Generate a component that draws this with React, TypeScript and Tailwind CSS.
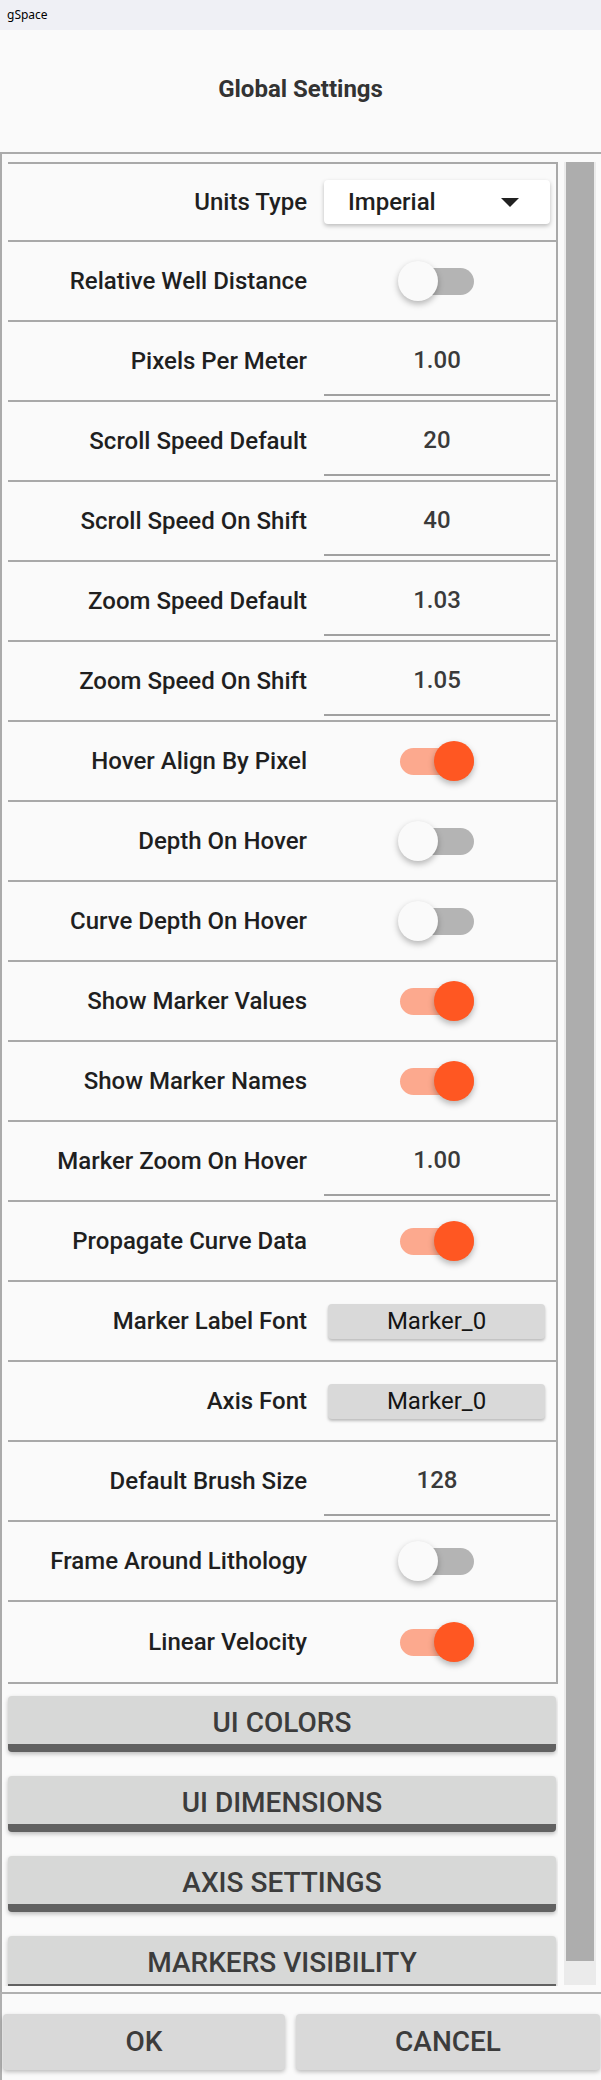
type Row =
  | { label: string; kind: 'select'; value: string }
  | { label: string; kind: 'toggle'; on: boolean }
  | { label: string; kind: 'input'; value: string }
  | { label: string; kind: 'font'; value: string };

const rows: Row[] = [
  { label: 'Units Type', kind: 'select', value: 'Imperial' },
  { label: 'Relative Well Distance', kind: 'toggle', on: false },
  { label: 'Pixels Per Meter', kind: 'input', value: '1.00' },
  { label: 'Scroll Speed Default', kind: 'input', value: '20' },
  { label: 'Scroll Speed On Shift', kind: 'input', value: '40' },
  { label: 'Zoom Speed Default', kind: 'input', value: '1.03' },
  { label: 'Zoom Speed On Shift', kind: 'input', value: '1.05' },
  { label: 'Hover Align By Pixel', kind: 'toggle', on: true },
  { label: 'Depth On Hover', kind: 'toggle', on: false },
  { label: 'Curve Depth On Hover', kind: 'toggle', on: false },
  { label: 'Show Marker Values', kind: 'toggle', on: true },
  { label: 'Show Marker Names', kind: 'toggle', on: true },
  { label: 'Marker Zoom On Hover', kind: 'input', value: '1.00' },
  { label: 'Propagate Curve Data', kind: 'toggle', on: true },
  { label: 'Marker Label Font', kind: 'font', value: 'Marker_0' },
  { label: 'Axis Font', kind: 'font', value: 'Marker_0' },
  { label: 'Default Brush Size', kind: 'input', value: '128' },
  { label: 'Frame Around Lithology', kind: 'toggle', on: false },
  { label: 'Linear Velocity', kind: 'toggle', on: true },
];

const sections = ['UI Colors', 'UI Dimensions', 'Axis Settings', 'Markers Visibility'];

function Toggle({ on }: { on: boolean }) {
  return (
    <div className="relative ml-[74px] h-[40px] w-[76px]">
      <div
        className={`absolute left-[2px] top-[7px] h-[27px] w-[74px] rounded-full ${on ? 'bg-[#fca98e]' : 'bg-[#b4b4b4]'}`}
      />
      <div
        className={`absolute top-0 h-[40px] w-[40px] rounded-full shadow-[0_3px_6px_rgba(0,0,0,0.28)] ${
          on ? 'left-[36px] bg-[#ff5722]' : 'left-0 bg-[#fafafa]'
        }`}
      />
    </div>
  );
}

function Control({ row }: { row: Row }) {
  if (row.kind === 'select') {
    return (
      <div className="flex h-[44px] w-[226px] items-center justify-between rounded-[4px] bg-white pl-[24px] pr-[31px] shadow-[0_2px_4px_rgba(0,0,0,0.25)]">
        <span className="font-medium text-[#1f1f1f]">{row.value}</span>
        <svg width="18" height="9" viewBox="0 0 18 9">
          <polygon points="0,0 18,0 9,9" fill="#212121" />
        </svg>
      </div>
    );
  }
  if (row.kind === 'toggle') {
    return (
      <div className="w-[226px]">
        <Toggle on={row.on} />
      </div>
    );
  }
  if (row.kind === 'font') {
    return (
      <div className="w-[226px]">
        <div className="ml-[4px] flex h-[35px] w-[217px] items-center justify-center rounded-[4px] bg-[#d9d9d9] text-[#141414] shadow-[0_2px_3px_rgba(0,0,0,0.25)]">
          {row.value}
        </div>
      </div>
    );
  }
  return (
    <div className="mb-[4px] flex h-[70px] w-[226px] items-center justify-center self-end border-b-2 border-[#a0a0a0] font-medium text-[#3a3a3a]">
      {row.value}
    </div>
  );
}

export default function App() {
  return (
    <div className="flex h-[2080px] w-[601px] flex-col overflow-hidden bg-[#fafafa] font-[Roboto,sans-serif] text-[24px]">
      <div className="flex h-[30px] shrink-0 items-center bg-[#eff0f5] px-[7px] font-['Noto_Sans',sans-serif] text-[12px] text-black">
        gSpace
      </div>

      <div className="flex h-[122px] shrink-0 items-center justify-center pb-[4px] font-bold text-[#333333]">
        Global Settings
      </div>

      <div className="flex h-[1840px] shrink-0 border-l-2 border-t-2 border-[#ababab]">
        <div className="h-[1832px] w-[556px] overflow-hidden pl-[6px] pt-[8px]">
          <div className="w-[550px] divide-y-2 divide-[#a9a9a9] border-y-2 border-r-2 border-[#a9a9a9]">
            {rows.map((row) => (
              <div key={row.label} className="flex h-[80px] items-center first:h-[78px]">
                <div className="w-[299px] text-right font-medium text-[#1f1f1f]">{row.label}</div>
                <div className="ml-[17px] flex h-full items-center">
                  <Control row={row} />
                </div>
              </div>
            ))}
          </div>

          <div className="mt-[12px] flex flex-col gap-[24px]">
            {sections.map((s) => (
              <button
                key={s}
                className="flex h-[56px] w-[548px] shrink-0 items-center justify-center rounded-[4px] border-b-[8px] border-[#616161] bg-[#d7d8d7] pt-[5px] text-[28px] font-medium uppercase text-[#3c3c3c] shadow-[0_2px_4px_rgba(0,0,0,0.25)]"
              >
                {s}
              </button>
            ))}
          </div>
        </div>

        <div className="ml-[6px] mt-[8px] h-[1823px] w-[32px] bg-[#ebebeb] px-[2px]">
          <div className="h-[1799px] w-[28px] bg-[#adadad]" />
        </div>
      </div>

      <div className="flex flex-1 gap-[11px] border-l-2 border-t-2 border-[#b0b0b0] pl-[1px] pt-[20px]">
        <button className="h-[56px] w-[282px] rounded-[4px] bg-[#d9d9d9] text-[28px] font-medium text-[#3c3c3c] shadow-[0_2px_4px_rgba(0,0,0,0.25)]">
          OK
        </button>
        <button className="h-[56px] w-[304px] rounded-[4px] bg-[#d9d9d9] text-[28px] font-medium text-[#3c3c3c] shadow-[0_2px_4px_rgba(0,0,0,0.25)]">
          CANCEL
        </button>
      </div>
    </div>
  );
}
